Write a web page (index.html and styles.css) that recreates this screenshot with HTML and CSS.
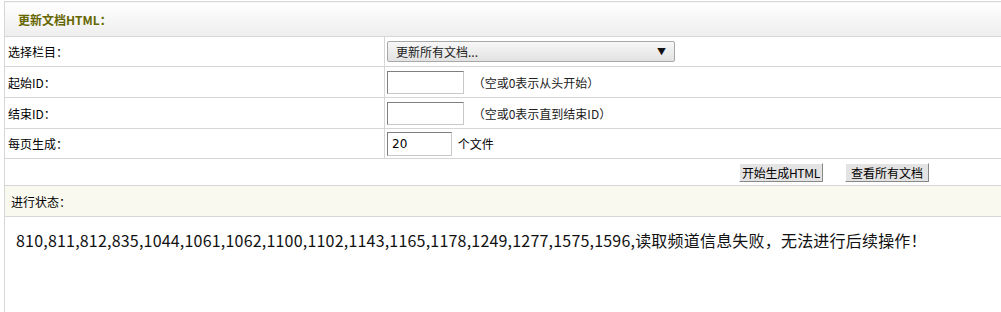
FILE: index.html
```html
<!DOCTYPE html>
<html lang="zh-CN">
<head>
  <meta charset="UTF-8" />
  <title>更新文档HTML</title>
  <link rel="stylesheet" href="styles.css">
</head>
<body>
  <table class="main-tb">
    <tr class="tb-head">
      <td colspan="2"><b>更新文档HTML：</b></td>
    </tr>
    <tr class="row-30">
      <td class="label">选择栏目：</td>
      <td>
        <div class="fake-select">
          <span>更新所有文档...</span>
          <span class="arrow">▼</span>
        </div>
      </td>
    </tr>
    <tr class="row-31">
      <td class="label">起始ID：</td>
      <td>
        <input type="text" class="id-input" />
        <span class="tip">（空或0表示从头开始）</span>
      </td>
    </tr>
    <tr class="row-31">
      <td class="label">结束ID：</td>
      <td>
        <input type="text" class="id-input" />
        <span class="tip">（空或0表示直到结束ID）</span>
      </td>
    </tr>
    <tr class="row-30">
      <td class="label">每页生成：</td>
      <td>
        <input type="text" class="page-input" value="20" />
        <span class="unit">个文件</span>
      </td>
    </tr>
    <tr class="btn-row">
      <td colspan="2">
        <div class="btns">
          <button class="coolbg">开始生成HTML</button>
          <button class="coolbg">查看所有文档</button>
        </div>
      </td>
    </tr>
    <tr class="status-row">
      <td colspan="2">进行状态：</td>
    </tr>
    <tr class="msg-row">
      <td colspan="2">
        <div class="msg">810,811,812,835,1044,1061,1062,1100,1102,1143,1165,1178,1249,1277,1575,1596,读取频道信息失败，无法进行后续操作！</div>
      </td>
    </tr>
  </table>
</body>
</html>
```

FILE: styles.css
```css
body {
  margin: 1px 0 0 4px;
  overflow: hidden;
  background: #fff;
  font-family: "Noto Sans CJK SC", "DejaVu Sans", sans-serif;
  font-size: 12px;
  color: #000;
}

.main-tb {
  width: 1010px;
  border-collapse: collapse;
  border: 1px solid #d6d6d6;
  border-right: none;
}

.main-tb td {
  border-top: 1px solid #d6d6d6;
  border-bottom: 1px solid #d6d6d6;
  padding: 0;
}

.tb-head td {
  height: 34px;
  padding-left: 13px;
  background: linear-gradient(to bottom, #ffffff, #eeeeee);
  color: #666600;
}

.tb-head b {
  font-size: 12px;
}

.row-30 td {
  height: 29px;
}

.row-31 td {
  height: 30px;
}

.main-tb td.label {
  width: 376px;
  padding-left: 3px;
  border-right: 1px solid #d6d6d6;
}

.fake-select {
  width: 270px;
  height: 19px;
  margin-left: 2px;
  padding: 0 8px 0 8px;
  display: flex;
  align-items: center;
  justify-content: space-between;
  border: 1px solid #a8a8a8;
  border-radius: 2px;
  background: linear-gradient(to bottom, #f7f7f7, #e2e2e2);
  color: #222;
}

.fake-select .arrow {
  font-size: 9px;
  color: #111;
}

.id-input,
.page-input {
  margin: 0 0 0 2px;
  padding: 0 4px;
  height: 21px;
  border: 1px solid #c8c8c8;
  border-top-color: #7f7f7f;
  border-left-color: #7f7f7f;
  font-family: "DejaVu Sans", sans-serif;
  font-size: 12px;
  vertical-align: middle;
  box-sizing: content-box;
}

.id-input {
  width: 67px;
}

.page-input {
  width: 55px;
  height: 22px;
}

.tip {
  margin-left: 6px;
  color: #222;
  vertical-align: middle;
}

.unit {
  margin-left: 3px;
  vertical-align: middle;
}

.btn-row td {
  height: 26px;
}

.btns {
  display: flex;
  gap: 22px;
  padding-left: 734px;
}

.coolbg {
  height: 19px;
  width: 84px;
  padding: 0;
  border: 1px solid;
  border-color: #ffffff #888888 #888888 #ffffff;
  background: #e3e3e3;
  font-family: "Noto Sans CJK SC", sans-serif;
  font-size: 12px;
  letter-spacing: -0.3px;
  color: #000;
  line-height: 15px;
}

.coolbg + .coolbg {
  letter-spacing: 0;
}

.status-row td {
  height: 30px;
  padding-left: 6px;
  background: #f9f9ef;
}

.msg-row td {
  border-bottom: none;
  vertical-align: top;
  height: 100px;
}

.msg {
  padding: 11px 0 0 11px;
  font-size: 16px;
  letter-spacing: 0.2px;
  color: #111;
}
```
